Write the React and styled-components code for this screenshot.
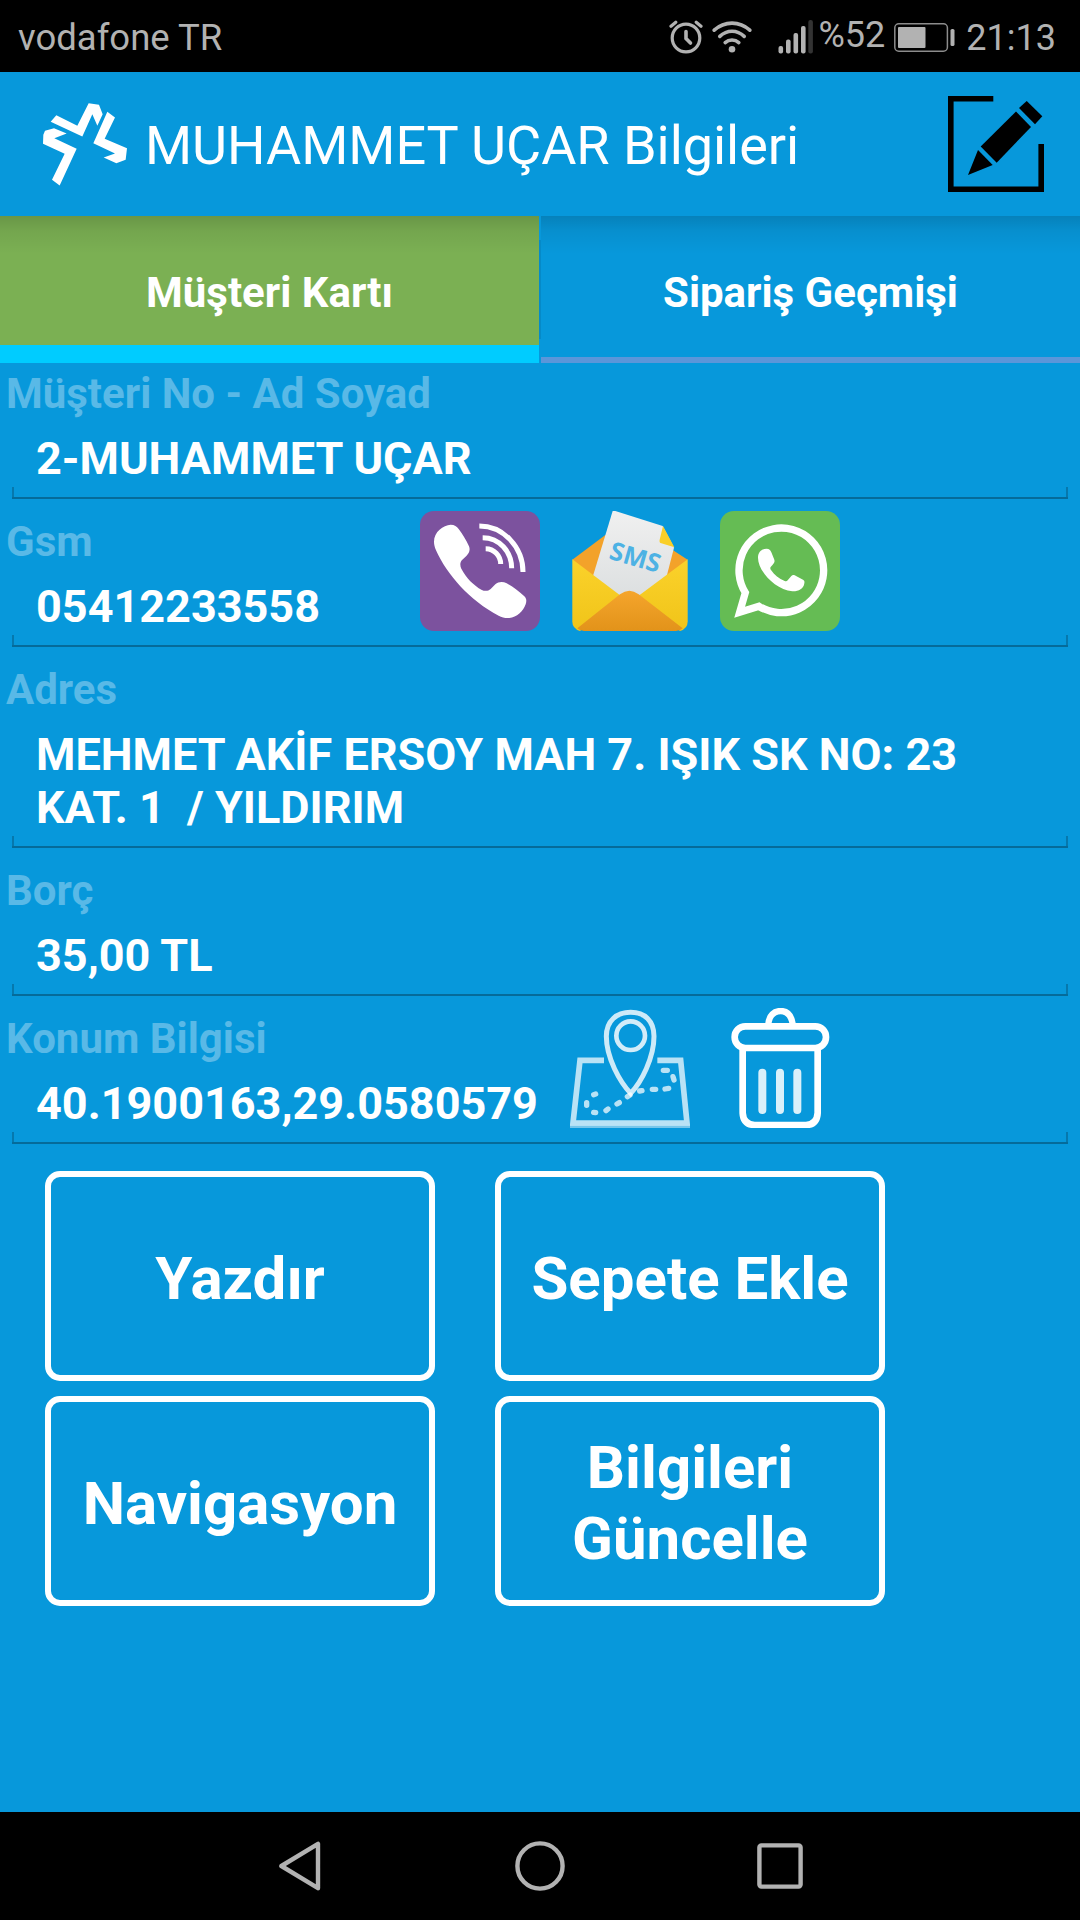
import { useState } from 'react';
import styled, { createGlobalStyle } from 'styled-components'

const GlobalStyle = createGlobalStyle`
  * {
    box-sizing: border-box;
  }
  body {
    margin: 0;
    background: #0798db;
    font-family: Roboto, 'Liberation Sans', sans-serif;
  }
`

const Screen = styled.div`
  display: flex;
  flex-direction: column;
  width: 1080px;
  height: 1920px;
  background: #0798db;
  color: #fff;
`

const StatusBar = styled.div`
  display: flex;
  align-items: center;
  height: 72px;
  padding: 4px 24px 0 18px;
  background: #000;
  color: #b2b2b2;
  font-size: 36.5px;
  line-height: 44px;
`

const StatusIcons = styled.div`
  display: flex;
  align-items: center;
  margin: -2px 0 0 auto;
`

const StatusIcon = styled.div`
  margin-right: ${props => props.$gap || 0}px;
  & svg {
    display: block;
  }
`

const Percent = styled.span`
  font-size: 36px;
  margin: -5px 9px 0 6px;
`

const Clock = styled.span`
  margin: 2px 0 0 10px;
  font-size: 36px;
`

const Toolbar = styled.header`
  display: flex;
  align-items: center;
  height: 144px;
  padding: 0 36px 0 43px;
`

const Title = styled.h1`
  flex: 1;
  margin: 0 0 0 18px;
  padding-top: 4px;
  font-size: 54px;
  font-weight: 400;
  line-height: 64px;
  letter-spacing: -.04px;
  white-space: nowrap;
`

const Tabs = styled.nav`
  display: flex;
  height: 147px;
`

/* the toolbar drops its shadow on the top of every tab */
const Tab = styled.button`
  flex: 1;
  border: 0;
  padding: ${props => props.$active ? '23px 0 0' : '23px 0 12px'};
  border-bottom: ${props => props.$active ? '18px solid #00ccff' : '6px solid #5b96d9'};
  background: linear-gradient(rgba(0, 0, 0, .15), rgba(0, 0, 0, .06) 15px, rgba(0, 0, 0, 0) 38px), ${props => props.$active ? '#7bb053' : '#0798db'};
  color: #fff;
  font-family: inherit;
  font-size: 42px;
  font-weight: 700;
`

const TabDivider = styled.div`
  width: 2px;
  margin: 24px 0;
  background: #068ac8;
`

const Content = styled.main`
  flex: 1;
`

const Field = styled.div`
  display: grid;
  grid-template-rows: 56px auto;
`

const Label = styled.span`
  grid-area: 1 / 1;
  padding: 5px 0 0 6px;
  font-size: 42px;
  font-weight: 700;
  line-height: 51px;
  color: #59b9e7;
`

const Value = styled.div`
  grid-area: 2 / 1;
  margin: 0 12px 12px;
  padding: 13px 24px 12px;
  font-size: 45px;
  font-weight: 700;
  line-height: 53px;
  white-space: pre-line;
  border-bottom: 2px solid #056b9a;
  /* short ticks that close the underline on both sides */
  background:
    linear-gradient(#0678ad, #0678ad) left bottom / 2px 10px no-repeat,
    linear-gradient(#0678ad, #0678ad) right bottom / 2px 10px no-repeat;

  & span {
    white-space: pre;
  }
`

const FieldActions = styled.div`
  grid-area: 1 / 1 / 3 / 2;
  display: flex;
  gap: 30px;
  height: 120px;
  margin-left: ${props => props.$start}px;
  z-index: 1;
`

const IconButton = styled.button`
  display: block;
  width: ${props => props.$size || 120}px;
  height: ${props => props.$size || 120}px;
  padding: 0;
  border: 0;
  background: none;
  & svg {
    display: block;
    width: 100%;
    height: 100%;
  }
`

const ButtonGrid = styled.div`
  display: grid;
  grid-template-columns: 390px 390px;
  grid-auto-rows: 210px;
  gap: 15px 60px;
  padding: 15px 45px;
`

const ActionButton = styled.button`
  padding: 4px 20px 0;
  border: 6px solid #fff;
  border-radius: 15px;
  background: none;
  color: #fff;
  font-family: inherit;
  font-size: 60px;
  font-weight: 700;
  line-height: 71px;
`

const NavBar = styled.footer`
  display: grid;
  grid-template-columns: repeat(3, 240px);
  justify-content: center;
  place-items: center;
  height: 108px;
  background: #000;
`

const AlarmIcon = () => (
  <svg width="34" height="34" viewBox="0 0 34 34" fill="none" stroke="#b2b2b2" strokeWidth="3.2" strokeLinecap="round">
    <circle cx="17" cy="18" r="13.8" />
    <path d="M17 11.5V18.5L21.5 23" strokeWidth="3.6" />
    <path d="M2 6.2L6.8 2.2M32 6.2L27.2 2.2" />
  </svg>
)

const WifiIcon = () => (
  <svg width="40" height="34" viewBox="0 0 40 34" fill="none" stroke="#b2b2b2" strokeWidth="3.6" strokeLinecap="round">
    <path d="M2.2 10.2C12.5 .8 27.5 .8 37.8 10.2" />
    <path d="M7.8 16.4C15 9.6 25 9.6 32.2 16.4" />
    <path d="M13.2 22.6C17 19.2 23 19.2 26.8 22.6" />
    <circle cx="20" cy="29.2" r="3.3" fill="#b2b2b2" stroke="none" />
  </svg>
)

const SignalIcon = () => (
  <svg width="35" height="34" viewBox="0 0 35 34" fill="#b2b2b2">
    <rect x="0.5" y="26" width="4.6" height="7.5" rx="2" />
    <rect x="8" y="19.5" width="4.6" height="14" rx="2" />
    <rect x="15.5" y="13" width="4.6" height="20.5" rx="2" />
    <rect x="23" y="6" width="4.6" height="27.5" rx="2" />
    <rect x="30.3" y="0" width="4.6" height="33.5" rx="2" fill="#333" />
  </svg>
)

const BatteryIcon = () => (
  <svg width="62" height="29" viewBox="0 0 62 29">
    <rect x="0.8" y="0.8" width="52.6" height="27.4" rx="4" fill="none" stroke="#8c8c8c" strokeWidth="1.5" />
    <rect x="4" y="4" width="27.5" height="21" rx="1" fill="#b2b2b2" />
    <rect x="56.5" y="6" width="4" height="17" rx="1.6" fill="#b2b2b2" />
  </svg>
)

const Logo = () => (
  <svg width="84" height="83" viewBox="0 0 252 248" fill="#fff">
    <path d="M40 36L103 68L137 0L168 5L179 33L163 68L148 33L118 100L23 56Z" />
    <path d="M193 26L216 43L185 107L252 135L248 170L220 180L182 163L216 151L151 120Z" />
    <path d="M6 83L33 75L71 91L34 105L101 137L50 247L27 230L65 152L0 122L1 95Z" />
  </svg>
)

const EditIcon = () => (
  <svg viewBox="0 0 96 96">
    <path d="M45.3 2.8H2.8V93.2H93.2V48" fill="none" stroke="#000" strokeWidth="5.6" />
    <path d="M20 79L30 54L44.7 69Z" />
    <path d="M32.7 50.5L68 15.5L83 31L48.7 66.7Z" />
    <path d="M71 12L78.7 5L94.3 20.3L87 28.3Z" />
  </svg>
)

const CallIcon = () => (
  <svg viewBox="0 0 360 360">
    <rect width="360" height="360" rx="42" fill="#7c529e" />
    <path fill="#fff" d="M42 92C42 62 70 42 92 41C104 41 110 46 116 54C128 71 138 85 147 106C152 118 146 128 139 135L127 146C119 154 120 164 124 173C140 202 160 222 184 236C194 241 204 241 212 234L226 220C236 211 249 211 260 217C278 227 296 240 313 256C320 263 320 270 317 280C310 300 290 320 268 321C256 322 246 319 236 314C150 270 80 190 48 118C44 108 42 100 42 92Z" />
    <g fill="none" stroke="#fff" strokeWidth="15">
      <path d="M178 45C250 45 309 108 309 183" />
      <path d="M188 80C238 80 275 122 275 172" />
      <path d="M197 113C222 113 242 134 242 159" />
    </g>
  </svg>
)

const SmsIcon = () => (
  <svg viewBox="0 0 360 360">
    <defs>
      <linearGradient id="smsSide" x1="0" y1="0" x2="0" y2="1">
        <stop offset="0" stopColor="#fbd22b" />
        <stop offset="1" stopColor="#f0c419" />
      </linearGradient>
      <linearGradient id="smsFlap" x1="0" y1="0" x2="0" y2="1">
        <stop offset="0" stopColor="#f5a52c" />
        <stop offset="1" stopColor="#e2931a" />
      </linearGradient>
      <linearGradient id="smsPaper" x1="0" y1="0" x2="0" y2="1">
        <stop offset="0" stopColor="#f0f0f0" />
        <stop offset="1" stopColor="#dcdfe0" />
      </linearGradient>
    </defs>
    <path d="M7 146L106 72L300 112L353 146L280 210H80Z" fill="#f3a22a" />
    <path d="M128 0H136L278 45L312 110L285 215L205 262H150L66 205Z" fill="url(#smsPaper)" />
    <path d="M279 45L313 109L274 97Q267 95 269 86Z" fill="#f9cf28" />
    <path d="M7 145L160 260L30 360Q7 352 7 332Z" fill="url(#smsSide)" />
    <path d="M353 145L198 260L330 360Q353 352 353 332Z" fill="url(#smsSide)" />
    <path d="M22 352L150 250Q178 228 206 250L338 352Q330 360 318 360H42Q30 360 22 352Z" fill="url(#smsFlap)" />
    <text x="195" y="165" transform="rotate(16 195 142)" textAnchor="middle" fontFamily="Open Sans, sans-serif" fontSize="76" fontWeight="700" fill="#4db2e4">SMS</text>
  </svg>
)

const WhatsappIcon = () => (
  <svg viewBox="0 0 360 360">
    <rect width="360" height="360" rx="42" fill="#65bc54" />
    <path d="M76 245A127 127 0 1 1 117 286L59 304Z" fill="none" stroke="#fff" strokeWidth="22" />
    <path fill="#fff" d="M114 140C114 124 125 113 140 113C148 113 151 117 154 124L163 146C165 152 162 156 158 161L152 168C150 171 151 174 153 177C163 192 177 203 194 210C198 212 201 211 203 208L214 195C217 192 220 191 224 193L249 206C253 208 254 211 253 217C251 234 234 242 217 241C165 236 114 180 114 140Z" />
  </svg>
)

const MapIcon = () => (
  <svg viewBox="0 0 360 360" fill="none" stroke="#fff">
    <path d="M102 157H30L9 345H351L332 157H262" strokeWidth="17" strokeOpacity=".72" />
    <path d="M0 356H360" strokeWidth="8" strokeOpacity=".45" />
    <path d="M182 256C150 222 109 150 109 85C109 38 140 13 182 13C224 13 252 38 252 85C252 150 214 222 182 256Z" strokeWidth="15" strokeOpacity=".8" />
    <circle cx="182" cy="83" r="43" strokeWidth="14" strokeOpacity=".82" />
    <path
      d="M280 187H292M309 206L312 216M285 243L296 241M247 244H257M209 249L216 248M172 266L180 261M141 288L148 284M108 308L114 303M71 313L77 314M50 284V292M71 260L77 258"
      strokeWidth="16"
      strokeLinecap="round"
      strokeOpacity=".72"
    />
  </svg>
)

const TrashIcon = () => (
  <svg viewBox="0 0 360 360" fill="none" stroke="#fff" strokeWidth="20">
    <rect x="44" y="55" width="274" height="65" rx="32" />
    <path d="M145 48C148 22 162 9 182 9C202 9 214 22 218 48" strokeWidth="19" />
    <path d="M68 122V315Q70 350 104 351H258Q291 350 293 315V122" />
    <path d="M127 194V306M180 194V306M232 194V306" strokeWidth="24" strokeLinecap="round" strokeOpacity=".85" />
  </svg>
)

const BackIcon = () => (
  <svg width="44" height="50" viewBox="0 0 44 50" fill="none" stroke="#b2b2b2" strokeWidth="4.4" strokeLinejoin="round">
    <path d="M3.4 25L40 2.8V47.2Z" />
  </svg>
)

const HomeIcon = () => (
  <svg width="50" height="50" viewBox="0 0 50 50" fill="none" stroke="#b2b2b2" strokeWidth="4.4">
    <circle cx="25" cy="25" r="22.6" />
  </svg>
)

const RecentIcon = () => (
  <svg width="46" height="46" viewBox="0 0 46 46" fill="none" stroke="#b2b2b2" strokeWidth="4.4">
    <rect x="2.4" y="2.4" width="41.2" height="41.2" rx="2" />
  </svg>
)

const tabs = ["Müşteri Kartı", "Sipariş Geçmişi"]
const actions = ["Yazdır", "Sepete Ekle", "Navigasyon", "Bilgileri Güncelle"]

const CustomerField = ({ label, value, start, children }) => (
  <Field>
    <Label>{label}</Label>
    <Value>{value}</Value>
    {children && <FieldActions $start={start}>{children}</FieldActions>}
  </Field>
)

const App = () => {
  const [activeTab, setActiveTab] = useState(0)

  return (
    <>
      <GlobalStyle />
      <Screen>
        <StatusBar>
          vodafone TR
          <StatusIcons>
            <StatusIcon $gap={9}><AlarmIcon /></StatusIcon>
            <StatusIcon $gap={26}><WifiIcon /></StatusIcon>
            <StatusIcon><SignalIcon /></StatusIcon>
            <Percent>%52</Percent>
            <StatusIcon><BatteryIcon /></StatusIcon>
            <Clock>21:13</Clock>
          </StatusIcons>
        </StatusBar>
        <Toolbar>
          <Logo />
          <Title>MUHAMMET UÇAR Bilgileri</Title>
          <IconButton $size={96} aria-label="Düzenle"><EditIcon /></IconButton>
        </Toolbar>
        <Tabs>
          <Tab $active={activeTab === 0} onClick={() => setActiveTab(0)}>{tabs[0]}</Tab>
          <TabDivider />
          <Tab $active={activeTab === 1} onClick={() => setActiveTab(1)}>{tabs[1]}</Tab>
        </Tabs>
        <Content>
          <CustomerField label="Müşteri No - Ad Soyad" value="2-MUHAMMET UÇAR" />
          <CustomerField label="Gsm" value="05412233558" start={420}>
            <IconButton><CallIcon /></IconButton>
            <IconButton><SmsIcon /></IconButton>
            <IconButton><WhatsappIcon /></IconButton>
          </CustomerField>
          <CustomerField
            label="Adres"
            value={<>MEHMET AKİF ERSOY MAH 7. IŞIK SK NO: 23{"\n"}<span>KAT. 1  / YILDIRIM</span></>}
          />
          <CustomerField label="Borç" value="35,00 TL" />
          <CustomerField label="Konum Bilgisi" value="40.1900163,29.0580579" start={570}>
            <IconButton><MapIcon /></IconButton>
            <IconButton><TrashIcon /></IconButton>
          </CustomerField>
          <ButtonGrid>
            {actions.map(name => <ActionButton key={name}>{name}</ActionButton>)}
          </ButtonGrid>
        </Content>
        <NavBar>
          <BackIcon />
          <HomeIcon />
          <RecentIcon />
        </NavBar>
      </Screen>
    </>
  )
};

export default App
